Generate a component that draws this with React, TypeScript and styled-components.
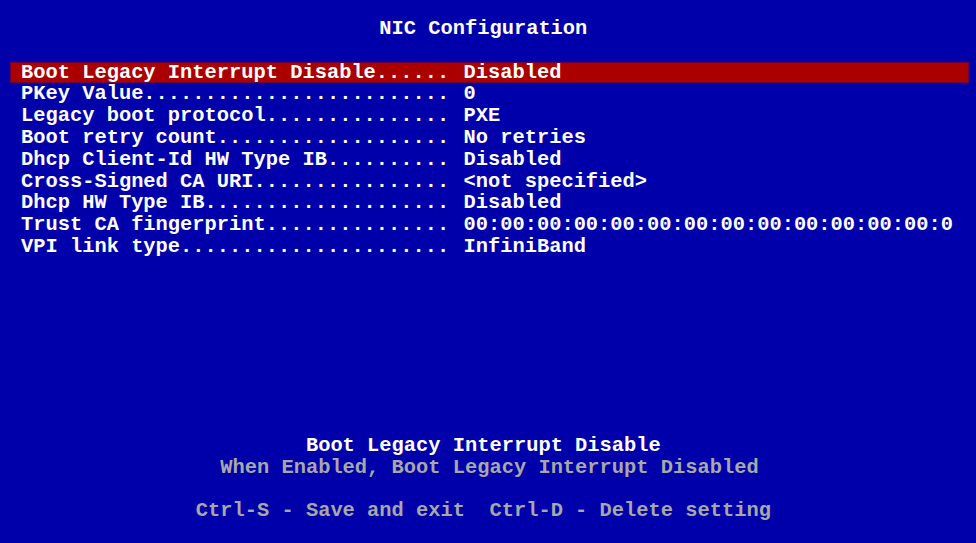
import styled, { createGlobalStyle } from 'styled-components';

const GlobalStyle = createGlobalStyle`
  html, body {
    margin: 0;
    padding: 0;
    background: #0000aa;
  }
`;

// 80x25 text console: every cell is one "ch" wide and one line tall
const Screen = styled.div`
  width: 976px;
  height: 543px;
  box-sizing: border-box;
  padding: 18px 0 21px;
  display: flex;
  flex-direction: column;
  background: #0000aa;
  color: #ffffff;
  font-family: "Liberation Mono", "DejaVu Sans Mono", monospace;
  font-size: 20.4px;
  font-weight: bold;
  line-height: 21.8px;
  white-space: pre;
  overflow: hidden;
`;

const Line = styled.div<{ $col?: number; $dim?: boolean }>`
  height: 21.8px;
  padding-left: ${(p) => p.$col ?? 0}ch;
  color: ${(p) => (p.$dim ? '#a8a8a8' : '#ffffff')};
`;

const Menu = styled.div`
  display: flex;
  flex-direction: column;
  margin-top: 21.8px;
`;

const Row = styled.div<{ $selected?: boolean }>`
  display: grid;
  grid-template-columns: calc(36ch + 2px) 1fr;
  height: 21.8px;
  margin: 0 7px 0 10px;
  padding-left: 11px;
  background: ${(p) => (p.$selected ? '#aa0000' : 'transparent')};
  box-shadow: ${(p) => (p.$selected ? 'inset 0 0 0 1px #6a0040' : 'none')};
`;

const Label = styled.span``;
const Value = styled.span``;

const Spacer = styled.div`
  flex: 1;
`;

const Help = styled.div`
  display: flex;
  flex-direction: column;
`;

const items: [string, string][] = [
  ['Boot Legacy Interrupt Disable', 'Disabled'],
  ['PKey Value', '0'],
  ['Legacy boot protocol', 'PXE'],
  ['Boot retry count', 'No retries'],
  ['Dhcp Client-Id HW Type IB', 'Disabled'],
  ['Cross-Signed CA URI', '<not specified>'],
  ['Dhcp HW Type IB', 'Disabled'],
  ['Trust CA fingerprint', '00:00:00:00:00:00:00:00:00:00:00:00:00:0'],
  ['VPI link type', 'InfiniBand'],
];

// centre a string on the 80 column grid the way the firmware does (floor)
const centerCol = (text: string) => Math.floor((80 - text.length) / 2);

function App() {
  const selected = 0;
  const title = 'NIC Configuration';
  const helpTitle = 'Boot Legacy Interrupt Disable';
  const helpText = 'When Enabled, Boot Legacy Interrupt Disabled';
  const keys = 'Ctrl-S - Save and exit  Ctrl-D - Delete setting';

  return (
    <>
      <GlobalStyle />
      <Screen>
        <Line $col={centerCol(title)}>{title}</Line>
        <Menu>
          {items.map(([label, value], i) => (
            <Row key={label} $selected={i === selected}>
              <Label>{label.padEnd(35, '.')}</Label>
              <Value>{value}</Value>
            </Row>
          ))}
        </Menu>
        <Spacer />
        <Help>
          <Line $col={centerCol(helpTitle)}>{helpTitle}</Line>
          <Line $col={centerCol(helpText)} $dim>{helpText}</Line>
          <Line />
          <Line $col={centerCol(keys)} $dim>{keys}</Line>
        </Help>
      </Screen>
    </>
  );
}

export default App;
